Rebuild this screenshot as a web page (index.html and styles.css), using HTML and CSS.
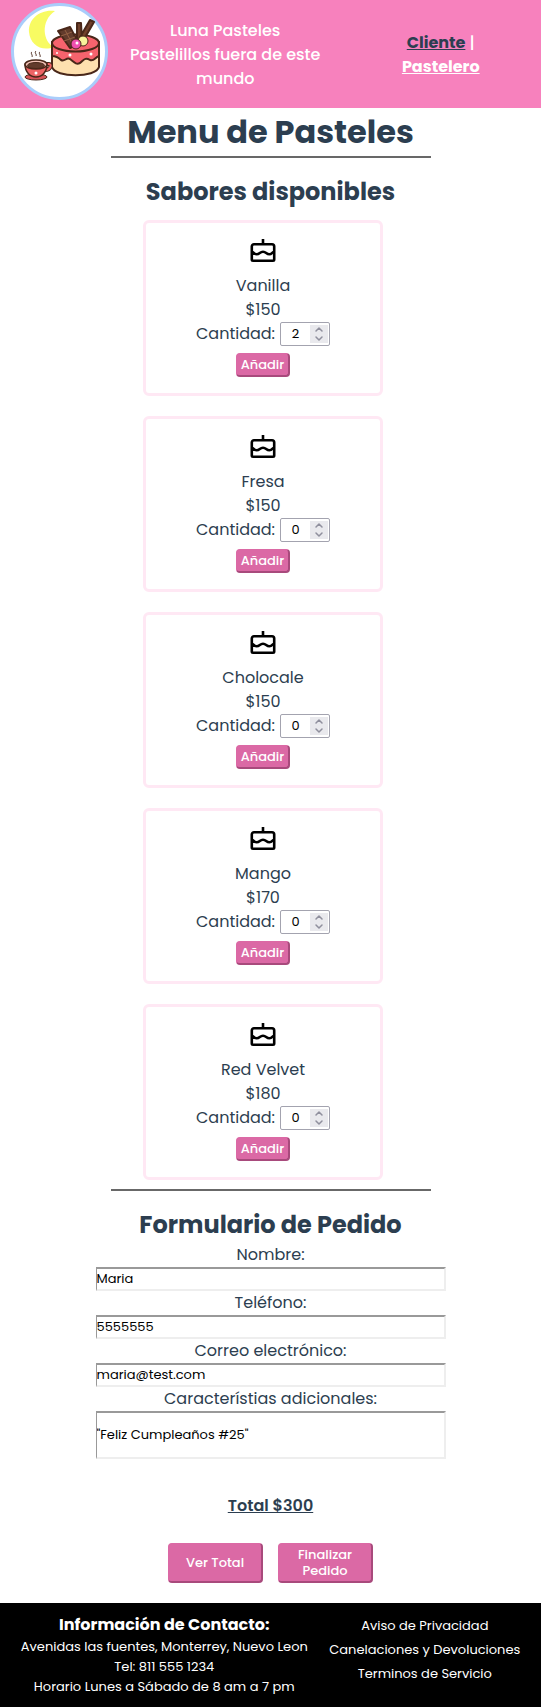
FILE: index.html
```html
<!DOCTYPE html>
<html lang="es">
<head>
<meta charset="utf-8">
<meta name="viewport" content="width=device-width, initial-scale=1">
<title>Luna Pasteles</title>
<link rel="stylesheet" href="styles.css">
</head>
<body>
<svg class="sprite" aria-hidden="true">
  <symbol id="cake" viewBox="0 0 32 32">
    <path d="M16 4v5M7 9.300h18a2.200 2.200 0 0 1 2.200 2.200v13a1.200 1.200 0 0 1-1.200 1.200H6a1.200 1.200 0 0 1-1.200-1.200v-13A2.200 2.200 0 0 1 7 9.300zM4.800 16.500c1.500 0 2 2.800 4.800 2.800 3.200 0 3.200-2.500 6.400-2.500s3.200 2.500 6.400 2.500c2.800 0 3.300-2.800 4.800-2.800" fill="none" stroke="#000" stroke-width="2.600"/>
  </symbol>
  <symbol id="arrows" viewBox="0 0 18 18">
    <path d="M6 6l3-3 3 3M6 12l3 3 3-3" fill="none" stroke="#8f8f9d" stroke-width="1.500" stroke-linecap="round" stroke-linejoin="round"/>
  </symbol>
</svg>

<header class="header">
  <svg class="logo" viewBox="0 0 97 97" role="img" aria-label="Luna Pasteles">
    <circle cx="48.500" cy="48.500" r="47" fill="#fff" stroke="#a9cdfb" stroke-width="3"/>
    <path d="M44 8C29 6 17 16 18 29c1 13 13 20 25 15-11-5-14-26 1-36z" fill="#f8fb62"/>
    <g stroke="#492719" stroke-width="2" stroke-linejoin="round">
      <path d="M41 39v25c3 11 44 11 47 0V39z" fill="#fee0af"/>
      <path d="M41 39v14c4 0 6 1 9 4 4 2 5-3 9-1 4 3 6 6 10 4 4-3 5-6 10-3 4 2 5-3 9-4V39z" fill="#f6636d"/>
      <ellipse cx="64.500" cy="40" rx="23.500" ry="8.500" fill="#f6636d"/>
      <path d="M66 20h4l1 19h-5zM79 17l4 2-11 19-4-2z" fill="#70402b"/>
      <path d="M47 28l12-4 9 17-9 4z" fill="#623b2c"/>
      <path d="M50 33l11-4M53 38l11-4M54 27l8 15" fill="none" stroke="#936044" stroke-width="1"/>
      <circle cx="72" cy="38" r="5" fill="#f8f39b" stroke-width="1"/>
      <circle cx="65" cy="41" r="5" fill="#ef4fb0" stroke-width="1"/>
      <ellipse cx="25" cy="74" rx="11" ry="3" fill="#d85358" stroke-width="1"/>
      <path d="M35 61h3c3 0 2 6-4 6" fill="none" stroke-width="4"/>
      <path d="M35 61h3c3 0 2 6-4 6" fill="none" stroke="#ee6465" stroke-width="2"/>
      <path d="M14 61c0 8 5 13 11 13s11-5 11-13z" fill="#ee6465" stroke-width="1.500"/>
      <ellipse cx="25" cy="61.500" rx="11" ry="4.500" fill="#f4c4b8" stroke-width="1.500"/>
      <ellipse cx="25" cy="62.500" rx="8.500" ry="3" fill="#623b2c" stroke-width="1"/>
      <path d="M21 49c-2 1 1 3 0 5M25 48c-2 2 1 3 0 5M29 49c-2 1 1 3 0 5" fill="none" stroke-width="1"/>
    </g>
    <g fill="#fff"><circle cx="66" cy="40" r="1.500"/><circle cx="59" cy="52" r="1.500"/><circle cx="46" cy="50" r="1"/><circle cx="80" cy="51" r="1.500"/><circle cx="25" cy="70" r="1.500"/></g>
  </svg>
  <p class="brand">Luna Pasteles<br>Pastelillos fuera de este mundo</p>
  <nav class="roles"><a class="role-active" href="#cliente">Cliente</a> | <a class="role" href="#pastelero">Pastelero</a></nav>
</header>

<main class="main">
  <h1 class="title">Menu de Pasteles</h1>
  <hr class="rule">
  <h2 class="subtitle">Sabores disponibles</h2>
  <ul class="menu">
    <li class="card">
      <svg class="cake"><use href="#cake"/></svg>
      <p>Vanilla</p><p>$150</p>
      <div class="quantity"><label for="q1">Cantidad:</label><span class="stepper"><input class="number" id="q1" type="number" value="2" min="0"><svg class="arrows" aria-hidden="true"><use href="#arrows"/></svg></span></div>
      <button class="add" type="button">Añadir</button>
    </li>
    <li class="card">
      <svg class="cake"><use href="#cake"/></svg>
      <p>Fresa</p><p>$150</p>
      <div class="quantity"><label for="q2">Cantidad:</label><span class="stepper"><input class="number" id="q2" type="number" value="0" min="0"><svg class="arrows" aria-hidden="true"><use href="#arrows"/></svg></span></div>
      <button class="add" type="button">Añadir</button>
    </li>
    <li class="card">
      <svg class="cake"><use href="#cake"/></svg>
      <p>Cholocale</p><p>$150</p>
      <div class="quantity"><label for="q3">Cantidad:</label><span class="stepper"><input class="number" id="q3" type="number" value="0" min="0"><svg class="arrows" aria-hidden="true"><use href="#arrows"/></svg></span></div>
      <button class="add" type="button">Añadir</button>
    </li>
    <li class="card">
      <svg class="cake"><use href="#cake"/></svg>
      <p>Mango</p><p>$170</p>
      <div class="quantity"><label for="q4">Cantidad:</label><span class="stepper"><input class="number" id="q4" type="number" value="0" min="0"><svg class="arrows" aria-hidden="true"><use href="#arrows"/></svg></span></div>
      <button class="add" type="button">Añadir</button>
    </li>
    <li class="card">
      <svg class="cake"><use href="#cake"/></svg>
      <p>Red Velvet</p><p>$180</p>
      <div class="quantity"><label for="q5">Cantidad:</label><span class="stepper"><input class="number" id="q5" type="number" value="0" min="0"><svg class="arrows" aria-hidden="true"><use href="#arrows"/></svg></span></div>
      <button class="add" type="button">Añadir</button>
    </li>
  </ul>
  <hr class="rule">
  <h2 class="subtitle">Formulario de Pedido</h2>
  <form class="order">
    <label for="nombre">Nombre:</label>
    <input class="field" id="nombre" type="text" value="Maria">
    <label for="telefono">Teléfono:</label>
    <input class="field" id="telefono" type="tel" value="5555555">
    <label for="correo">Correo electrónico:</label>
    <input class="field" id="correo" type="email" value="maria@test.com">
    <label for="extra">Característias adicionales:</label>
    <input class="field field-tall" id="extra" type="text" value="&quot;Feliz Cumpleaños #25&quot;">
    <p class="total">Total $300</p>
    <div class="actions">
      <button class="action" type="button">Ver Total</button>
      <button class="action" type="submit">Finalizar Pedido</button>
    </div>
  </form>
</main>

<footer class="footer">
  <address class="contact">
    <h3 class="contact-title">Información de Contacto:</h3>
    <p>Avenidas las fuentes, Monterrey, Nuevo Leon</p>
    <p>Tel: 811 555 1234</p>
    <p>Horario Lunes a Sábado de 8 am a 7 pm</p>
  </address>
  <nav class="legal">
    <a href="#privacidad">Aviso de Privacidad</a>
    <a href="#devoluciones">Canelaciones y Devoluciones</a>
    <a href="#terminos">Terminos de Servicio</a>
  </nav>
</footer>
</body>
</html>
```
FILE: styles.css
```css
* {
  box-sizing: border-box;
  margin: 0;
  padding: 0;
}

body {
  font-family: Poppins, Inter, "Open Sans", sans-serif;
  font-size: 16px;
  line-height: 24px;
  color: #2c3e50;
  text-align: center;
  background: #fff;
}

button,
input {
  font-family: inherit;
  font-size: 13px;
}

.sprite {
  display: none;
}

.header {
  display: grid;
  grid-template-columns: 97px 5fr 5fr;
  align-items: center;
  min-height: 108px;
  padding: 0 0 0 11px;
  color: #fff;
  background: #f781bd;
  font-weight: 500;
}

.logo {
  width: 97px;
  height: 97px;
  margin-bottom: 6px;
}

.brand {
  padding: 2px 0 0 18px;
}

.roles {
  padding: 2px 40px 0 56px;
}

.role,
.role-active {
  font-weight: 700;
  color: #fff;
}

.role-active {
  color: #2c3e50;
}

.main {
  display: flex;
  flex-direction: column;
  align-items: center;
  padding-bottom: 20px;
}

.title {
  font-size: 32px;
  line-height: 48px;
}

.rule {
  width: 320px;
  height: 2px;
  border: 0;
  background: #686868;
}

.subtitle {
  margin-top: 16px;
  font-size: 24px;
  line-height: 36px;
}

.menu {
  display: grid;
  gap: 20px;
  width: 240px;
  margin: 10px 15px 9px 0;
  list-style: none;
}

.card {
  display: flex;
  flex-direction: column;
  align-items: center;
  height: 176px;
  padding-top: 12px;
  border: 3px solid #ffe8f4;
  border-radius: 6px;
}

.cake {
  width: 32px;
  height: 32px;
  margin-bottom: 7px;
}

.quantity {
  display: flex;
  align-items: center;
  gap: 5px;
}

.stepper {
  display: flex;
  align-items: center;
  width: 50px;
  height: 24px;
  padding-right: 1px;
  border: 1px solid #a3a3af;
  border-radius: 2px;
  background: #fff;
}

.number {
  flex: 1;
  min-width: 0;
  border: 0;
  text-align: center;
  color: #000;
  background: none;
  appearance: textfield;
}

.number::-webkit-inner-spin-button {
  display: none;
}

.arrows {
  width: 18px;
  height: 18px;
  background: #e9e9ed;
}

.add,
.action {
  border: 1px solid #db69a5;
  border-right: 2px solid #a84a7c;
  border-bottom: 2px solid #a84a7c;
  border-radius: 4px;
  color: #fff;
  background: #db69a5;
  font-weight: 500;
}

.add {
  width: 54px;
  height: 24px;
  margin-top: 7px;
}

.order {
  display: flex;
  flex-direction: column;
  width: 350px;
}

.field {
  width: 100%;
  height: 24px;
  border: 2px solid #eee;
  border-top-color: #999;
  border-left: 1px solid #999;
  color: #000;
  background: #fff;
}

.field-tall {
  height: 48px;
}

.total {
  margin-top: 35px;
  font-weight: 600;
  text-decoration: underline;
}

.actions {
  display: flex;
  justify-content: center;
  gap: 15px;
  margin-top: 25px;
}

.action {
  width: 95px;
  height: 40px;
  line-height: 16px;
}

.footer {
  display: grid;
  grid-template-columns: 3fr 2fr;
  min-height: 104px;
  padding: 10px 12px 10px 8px;
  color: #fff;
  background: #000;
  font-size: 13px;
  line-height: 20px;
}

.contact {
  font-style: normal;
}

.contact-title {
  font-size: 16px;
  line-height: 24px;
}

.legal {
  display: flex;
  flex-direction: column;
  align-items: center;
  padding-top: 1px;
  line-height: 24px;
}

.legal a {
  color: #fff;
  text-decoration: none;
  white-space: nowrap;
}
```
